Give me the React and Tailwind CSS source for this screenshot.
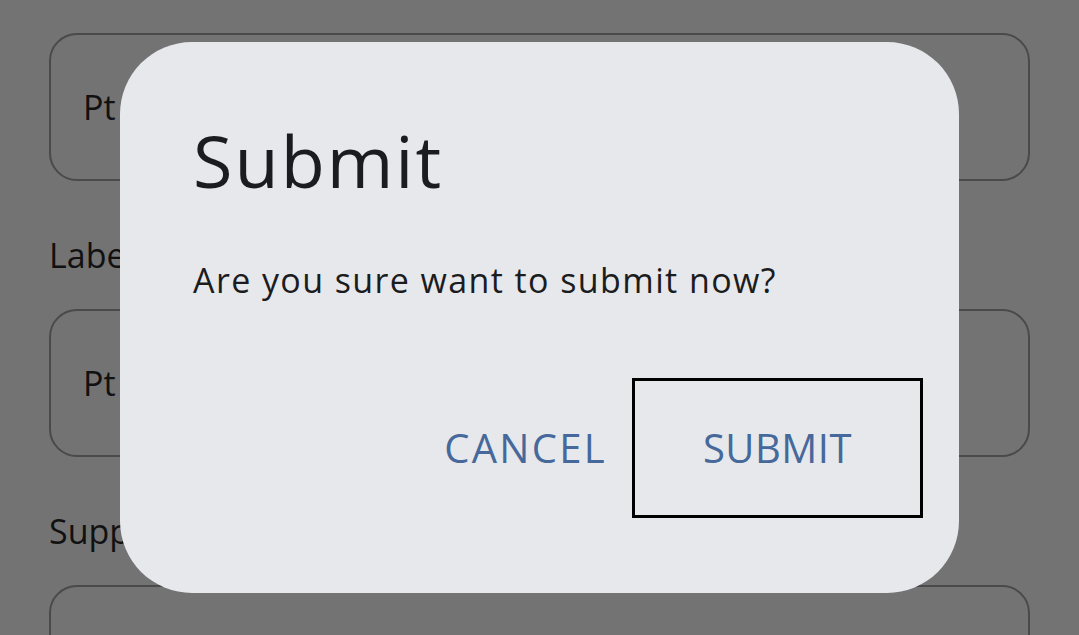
import React from 'react';

const Field = ({ value }) => (
  <div className="h-[148px] rounded-[28px] border-2 border-[#4a4a4b] flex items-center px-[32px]">
    <span className="text-[34px] text-[#111]">{value}</span>
  </div>
);

const Label = ({ children }) => (
  <div className="h-[128px] pt-[54px] text-[34px] leading-[40px] text-[#111]">{children}</div>
);

const App = () => {
  const font = { fontFamily: '"Open Sans", "Noto Sans", sans-serif' };

  return (
    <div className="w-[1079px] h-[635px] overflow-hidden bg-[#737374] relative" style={font}>
      {/* form behind the scrim */}
      <div className="px-[49px] pt-[33px] flex flex-col">
        <Field value="Pt 1234" />
        <Label>Label</Label>
        <Field value="Pt 5678" />
        <Label>Supplier</Label>
        <Field value="" />
      </div>

      {/* dialog */}
      <div className="absolute inset-0 flex items-center justify-center">
        <div className="w-[839px] h-[551px] bg-[#e7e8ec] rounded-[72px] flex flex-col pl-[73px] pr-[36px]">
          <h2 className="mt-[74px] text-[72px] leading-[88px] tracking-[2px] text-[#1b1c20]">Submit</h2>
          <p className="mt-[52px] text-[34px] leading-[48px] text-[#1b1c20] tracking-[1.4px]">
            Are you sure want to submit now?
          </p>
          <div className="mt-auto mb-[75px] flex justify-end items-center">
            <button className="h-[140px] pr-[25px] text-[40px] text-[#46689a] tracking-[2.3px]">CANCEL</button>
            <button className="w-[291px] h-[140px] border-[3px] border-black text-[40px] text-[#46689a] tracking-[0.5px]">
              SUBMIT
            </button>
          </div>
        </div>
      </div>
    </div>
  );
};

export default App;
